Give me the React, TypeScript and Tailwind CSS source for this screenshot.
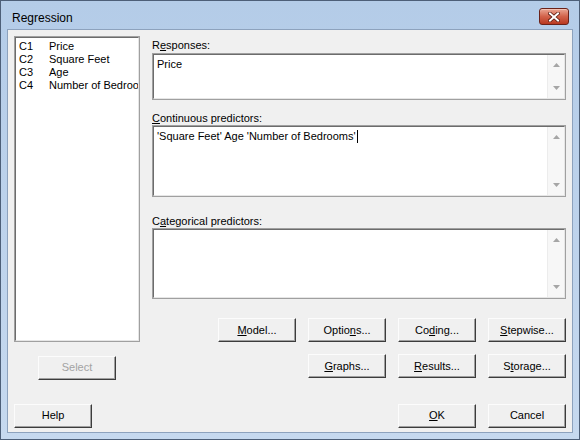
import type { ReactNode } from "react";

const font = { fontFamily: '"Liberation Sans", Arial, sans-serif' };

function Btn({ children, disabled }: { children: ReactNode; disabled?: boolean }) {
    return (
        <button
            type="button"
            className={
                "w-[78px] h-[24px] shrink-0 bg-[#f0f0f0] border border-t-[#fcfcfc] border-l-[#fcfcfc] border-r-[#3c3c3c] border-b-[#3c3c3c] shadow-[inset_-1px_-1px_0_#a0a0a0] text-[11px] leading-none " +
                (disabled ? "text-[#a3a3a3]" : "text-black")
            }
        >
            {children}
        </button>
    );
}

function Arrow({ down }: { down?: boolean }) {
    return (
        <svg width="7" height="4" viewBox="0 0 7 4">
            <polygon points={down ? "0,0 7,0 3.5,4" : "0,4 7,4 3.5,0"} fill="#a6a6a6" />
        </svg>
    );
}

function Field({ height, children }: { height: string; children?: ReactNode }) {
    return (
        <div className={`${height} border border-[#a0a0a0]`}>
            <div className="h-full flex border border-t-[#6c6c6c] border-l-[#6c6c6c] border-r-[#e6e6e6] border-b-[#e6e6e6] bg-white">
                <div className="flex-1 px-[3px] pt-[3px] text-[11px] leading-[13px] text-black">{children}</div>
                <div className="w-[17px] bg-[#f7f7f7] border-l border-[#ececec] flex flex-col items-center justify-between py-[8px]">
                    <Arrow />
                    <Arrow down />
                </div>
            </div>
        </div>
    );
}

const columns = [
    ["C1", "Price"],
    ["C2", "Square Feet"],
    ["C3", "Age"],
    ["C4", "Number of Bedrooms"],
];

export default function App() {
    return (
        <div
            className="w-[580px] h-[440px] flex flex-col bg-gradient-to-b from-[#b4cce8] to-[#c6d9ef] border border-[#4d5f78] overflow-hidden"
            style={font}
        >
            {/* caption bar */}
            <div className="h-[29px] shrink-0 flex items-center justify-between pl-[11px] pr-[10px]">
                <span className="text-[12px] text-black pt-[4px]">Regression</span>
                <div className="w-[30px] h-[17px] mt-[2px] rounded-[3px] border border-[#6b2219] bg-gradient-to-b from-[#e9a593] via-[#d2624a] to-[#b8371f] flex items-center justify-center shadow-[inset_0_1px_0_#f3c1b4]">
                    <svg width="12" height="10" viewBox="0 0 12 10">
                        <path d="M2 1.5 L10 8.5 M10 1.5 L2 8.5" stroke="#5a1a10" strokeWidth="3.6" strokeLinecap="square" />
                        <path d="M2 1.5 L10 8.5 M10 1.5 L2 8.5" stroke="#ffffff" strokeWidth="2" strokeLinecap="square" />
                    </svg>
                </div>
            </div>

            {/* client area */}
            <div className="mx-[7px] h-[402px] shrink-0 bg-[#f0f0f0] shadow-[0_0_0_1px_#8da2bd] flex flex-col p-[6px]">
                <div className="h-[306px] flex gap-[12px]">
                    <div className="w-[126px] border border-[#a0a0a0]">
                        <div className="h-full border border-t-[#6c6c6c] border-l-[#6c6c6c] border-r-[#e6e6e6] border-b-[#e6e6e6] bg-white pt-[2px] pl-[3px] overflow-hidden">
                            {columns.map(([id, name]) => (
                                <div key={id} className="flex text-[11px] leading-[13px] text-black whitespace-nowrap">
                                    <span className="w-[30px] shrink-0">{id}</span>
                                    <span>{name}</span>
                                </div>
                            ))}
                        </div>
                    </div>

                    <div className="w-[414px] flex flex-col text-[11px] text-black">
                        <div className="mt-[2px] h-[14px] leading-[14px]">
                            R<u>e</u>sponses:
                        </div>
                        <div className="mt-[1px]">
                            <Field height="h-[47px]">Price</Field>
                        </div>

                        <div className="mt-[11px] h-[14px] leading-[14px]">
                            <u>C</u>ontinuous predictors:
                        </div>
                        <Field height="h-[72px]">
                            <span>'Square Feet' Age 'Number of Bedrooms'</span>
                            <span className="inline-block w-px h-[13px] bg-black align-top ml-px" />
                        </Field>

                        <div className="mt-[17px] h-[14px] leading-[14px]">
                            C<u>a</u>tegorical predictors:
                        </div>
                        <Field height="h-[71px]" />

                        <div className="mt-[19px] flex justify-end gap-[12px]">
                            <Btn><u>M</u>odel...</Btn>
                            <Btn>Optio<u>n</u>s...</Btn>
                            <Btn>Co<u>d</u>ing...</Btn>
                            <Btn><u>S</u>tepwise...</Btn>
                        </div>
                    </div>
                </div>

                <div className="mt-[12px] flex gap-[12px]">
                    <div className="ml-[24px]">
                        <Btn disabled>Select</Btn>
                    </div>
                    <div className="flex-1" />
                    <Btn><u>G</u>raphs...</Btn>
                    <Btn><u>R</u>esults...</Btn>
                    <Btn>S<u>t</u>orage...</Btn>
                </div>

                <div className="mt-[24px] flex gap-[12px]">
                    <Btn>Help</Btn>
                    <div className="flex-1" />
                    <Btn><u>O</u>K</Btn>
                    <Btn>Cancel</Btn>
                </div>
            </div>
        </div>
    );
}
